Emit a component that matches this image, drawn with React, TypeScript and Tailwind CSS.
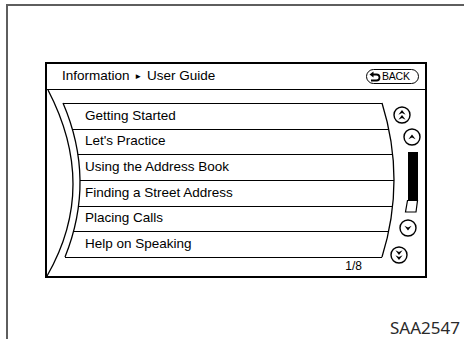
const rows = [
  "Getting Started",
  "Let's Practice",
  "Using the Address Book",
  "Finding a Street Address",
  "Placing Calls",
  "Help on Speaking",
];

// quadratic point, used to find where the row lines meet the curved edges
const q = (a: number, c: number, b: number, t: number) => (1 - t) ** 2 * a + 2 * t * (1 - t) * c + t * t * b;

function Dart({ x, y, dir = 1 }: { x: number; y: number; dir?: number }) {
  const d = dir;
  return <path d={`M ${x - 3.6} ${y + 2.2 * d} L ${x} ${y - 2.6 * d} L ${x + 3.6} ${y + 2.2 * d} L ${x} ${y + 0.6 * d} Z`} fill="black" />;
}

function ScreenDrawing() {
  const lines = rows.map((_, i) => i).concat(6).map((i) => {
    const t = i / 6;
    const y = Math.round(13 + (154 * i) / 6) + 0.5;
    return { y, x1: q(16, 49, 18, t), x2: q(335, 359, 335, t) };
  });

  return (
    <svg className="pointer-events-none absolute inset-0" width="378" height="186" viewBox="0 0 378 186">
      {/* outer curved edge */}
      <path d="M 1 0 Q 51.5 97 0 186" fill="none" stroke="black" strokeWidth="1.3" />
      {/* list edges */}
      <path d="M 16 13 Q 49 90 18 167" fill="none" stroke="black" strokeWidth="1.3" />
      <path d="M 335 13 Q 359 90 335 167" fill="none" stroke="black" strokeWidth="1.3" />
      {lines.map((l) => (
        <line key={l.y} x1={l.x1} y1={l.y} x2={l.x2} y2={l.y} stroke="black" strokeWidth="1.1" />
      ))}

      {/* scroll controls */}
      <circle cx="355" cy="25" r="8" fill="white" stroke="black" strokeWidth="1.4" />
      <Dart x={355} y={22.5} />
      <Dart x={355} y={27.5} />
      <circle cx="365" cy="47" r="8" fill="white" stroke="black" strokeWidth="1.4" />
      <Dart x={365} y={47} />
      <path d="M 361 62 L 371 62 L 371 110 L 361 110 Z" fill="black" />
      <path d="M 360.5 110.5 L 370.5 110.5 L 369 122 L 358.5 122 Z" fill="white" stroke="black" strokeWidth="1.2" />
      <circle cx="361" cy="138" r="8" fill="white" stroke="black" strokeWidth="1.4" />
      <Dart x={361} y={138} dir={-1} />
      <circle cx="352" cy="165" r="8" fill="white" stroke="black" strokeWidth="1.4" />
      <Dart x={352} y={162.5} dir={-1} />
      <Dart x={352} y={167.5} dir={-1} />
    </svg>
  );
}

function BackButton() {
  return (
    <div className="flex h-[15px] w-[53px] items-center gap-[1px] rounded-full border-[1.5px] border-black pl-[2px]">
      <svg width="12" height="11" viewBox="0 0 12 11">
        <path d="M 0.5 3.5 L 4.5 0.5 L 4.5 6.5 Z" fill="black" />
        <path d="M 4 3.5 L 7.5 3.5 A 3 3 0 0 1 7.5 9.5 L 2 9.5" fill="none" stroke="black" strokeWidth="1.8" />
      </svg>
      <span className="text-[10.5px] leading-none tracking-[-0.2px]">BACK</span>
    </div>
  );
}

export default function App() {
  return (
    <div className="h-[339px] w-[464px] overflow-hidden bg-white pl-[6px] pt-[4px] font-['Liberation_Sans',Arial,sans-serif] text-black">
      <div className="flex h-full flex-col border-l-2 border-t-2 border-[#5e5e5e] pt-[56px]">
        <div className="ml-[37px] flex h-[216px] w-[382px] flex-col border-2 border-black">
          <div className="flex h-[26px] shrink-0 items-center justify-between border-b border-black pl-[15px] pr-[6px]">
            <span className="text-[13.5px]">
              Information <span className="mx-[1px] text-[8px] align-[1px]">►</span> User Guide
            </span>
            <BackButton />
          </div>
          <div className="relative flex flex-1 flex-col pt-[13px]">
            {rows.map((r) => (
              <div key={r} className="flex h-[25.67px] items-center pl-[38px] text-[13.5px]">
                {r}
              </div>
            ))}
            <div className="flex h-[19px] items-center justify-end pr-[63px] text-[12px]">1/8</div>
            <ScreenDrawing />
          </div>
        </div>
        <div className="mt-[41px] pr-[4px] text-right font-['Noto_Sans',sans-serif] text-[17px] leading-[17px] text-[#2a2a2a]">
          SAA2547
        </div>
      </div>
    </div>
  );
}
